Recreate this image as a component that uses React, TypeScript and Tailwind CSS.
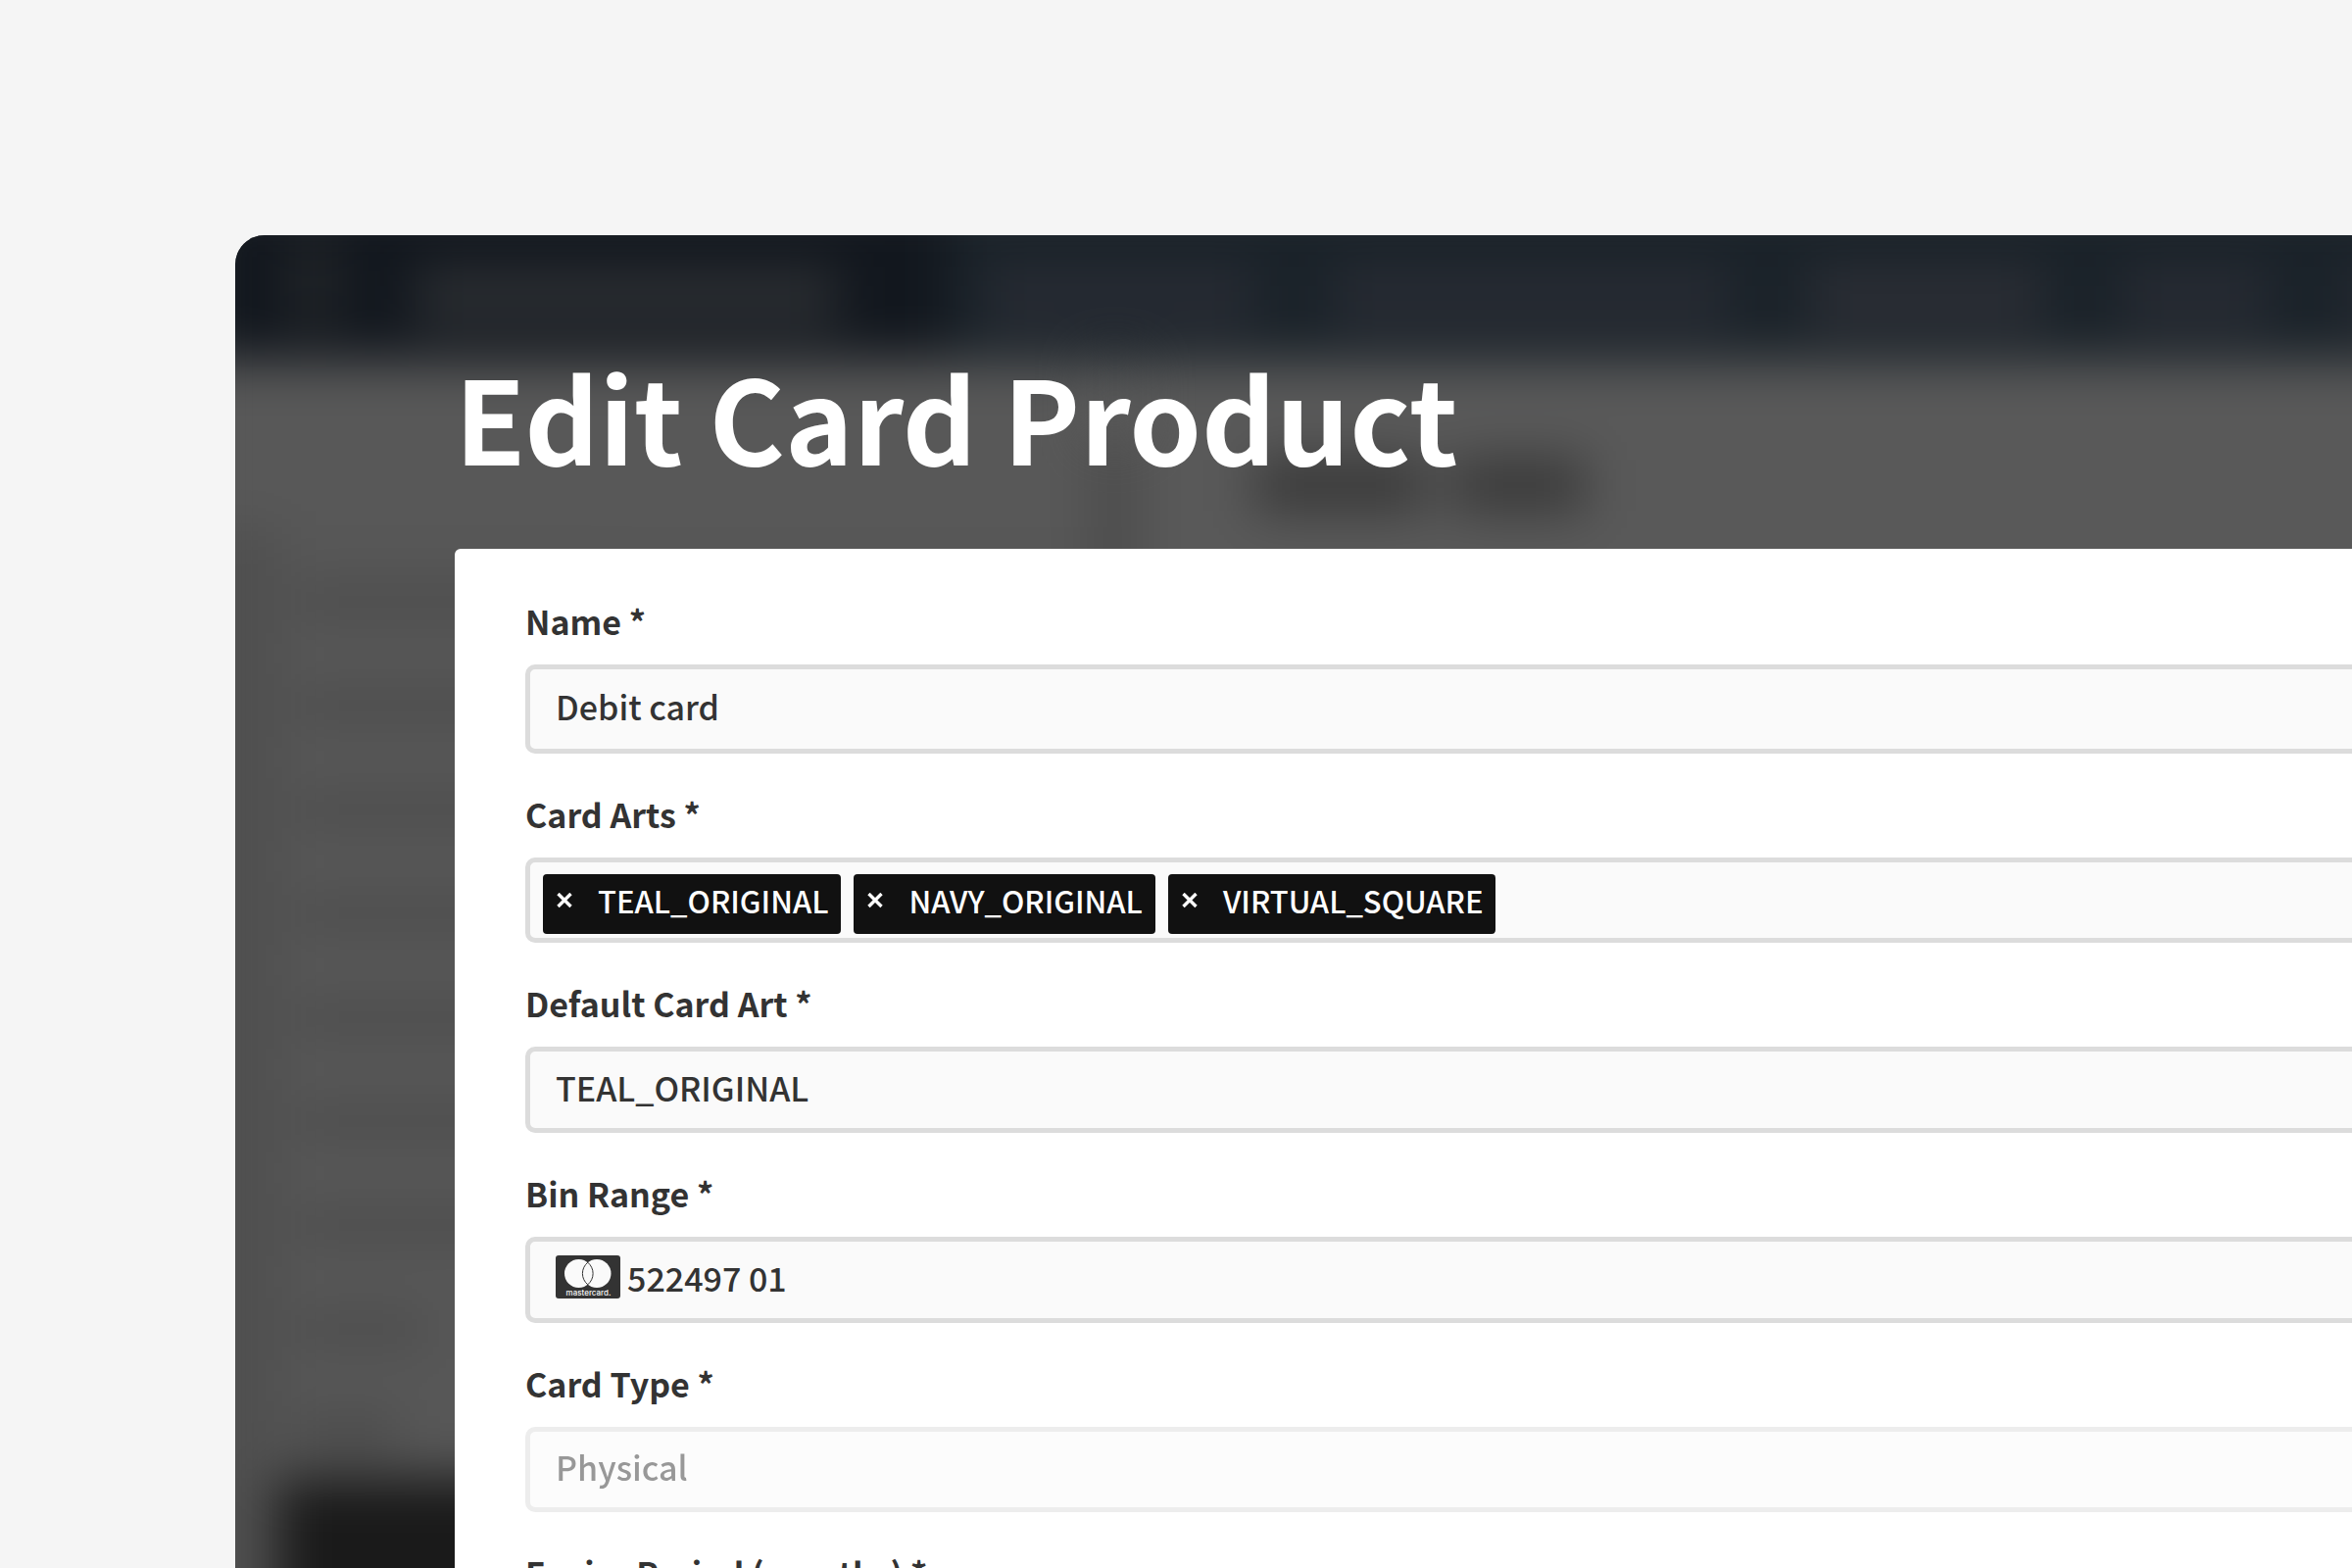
import { useState } from "react";
import type { ReactNode } from "react";

const CARD_ARTS = ["TEAL_ORIGINAL", "NAVY_ORIGINAL", "VIRTUAL_SQUARE"];

const CONTROL =
  "block w-full rounded-[10px] border-[5px] border-[#dcdcdc] bg-[#fafafa] px-[26px] pb-1.5 text-left font-medium text-[#333] outline-none focus:border-[#bbb]";

interface FieldProps {
  id: string;
  label: string;
  children: ReactNode;
}

function Field({ id, label, children }: FieldProps) {
  return (
    <div className="flex flex-col gap-5">
      <label id={`${id}-label`} htmlFor={id} className="self-start leading-[48px] font-bold">
        {label} *
      </label>
      {children}
    </div>
  );
}

function MastercardIcon() {
  return (
    <svg viewBox="0 0 66 44" className="h-11 w-[66px] shrink-0" aria-hidden="true">
      <rect width="66" height="44" rx="3" fill="#333" />
      <circle cx="23.5" cy="18.5" r="14.5" fill="#fafafa" />
      <circle cx="42" cy="18.5" r="14.5" fill="#fafafa" />
      <path
        d="M32.75 7.2a14.6 14.6 0 0 1 0 22.6a14.6 14.6 0 0 1 0-22.6z"
        fill="#fafafa"
        stroke="#333"
        strokeWidth="1"
      />
      <text x="33.5" y="40.5" textAnchor="middle" fontSize="8" fill="#fafafa" fontFamily="Inter, sans-serif">
        mastercard.
      </text>
    </svg>
  );
}

function CloseIcon() {
  return (
    <svg viewBox="0 0 16 16" className="h-4 w-4" aria-hidden="true">
      <path d="M1.5 1l13 13M14.5 1l-13 13" stroke="currentColor" strokeWidth="3.4" fill="none" />
    </svg>
  );
}

// Dimmed product page that sits behind the dialog
function Backdrop() {
  return (
    <div className="absolute inset-0 overflow-hidden bg-[#595959]" aria-hidden="true">
      <div className="-mx-10 -mt-10 blur-[26px]">
        <div className="flex h-[168px] items-end bg-[#1a2229]">
          <div className="flex h-[168px] w-[765px] items-end gap-20 bg-[#12171e] pb-8 pl-24">
            <div className="h-24 w-12 bg-[#222528]" />
            <div className="h-16 w-[430px] bg-[#2a2d31]" />
          </div>
          <div className="flex gap-20 pb-8 pl-10">
            <div className="h-16 w-[275px] bg-[#272b33]" />
            <div className="h-16 w-[405px] bg-[#272b33]" />
            <div className="h-16 w-60 bg-[#2b2e35]" />
            <div className="h-16 w-[150px] bg-[#272b33]" />
            <div className="h-16 w-40 bg-[#272b33]" />
          </div>
        </div>
        <div className="flex">
          <div className="flex h-[1300px] w-[914px] flex-col bg-[#585858]">
            <div className="h-[170px]" />
            <div className="flex flex-1 flex-col bg-[#4f4f4f] pl-[84px]">
              <div className="flex flex-col gap-[74px] bg-[#575757] pt-[60px] pb-[30px] pl-5">
                <div className="h-8 w-80 bg-[#4b4b4b]" />
                <div className="h-8 w-96 bg-[#4b4b4b]" />
                <div className="h-8 w-80 bg-[#4b4b4b]" />
                <div className="h-8 w-96 bg-[#4b4b4b]" />
                <div className="h-8 w-96 bg-[#4b4b4b]" />
                <div className="h-8 w-96 bg-[#4b4b4b]" />
                <div className="h-8 w-96 bg-[#4b4b4b]" />
                <div className="h-8 w-[130px] bg-[#4b4b4b]" />
                <div className="h-8 w-[100px] bg-[#484848]" />
              </div>
              <div className="flex-1 bg-[#1a1a1a]" />
            </div>
          </div>
          <div className="mt-20 w-12 bg-[#4c4c4c]" />
          <div className="flex flex-1 items-start gap-7 bg-[#595959] pt-[100px] pl-[118px]">
            <div className="h-[54px] w-[175px] bg-[#383838]" />
            <div className="h-[54px] w-[135px] bg-[#383838]" />
          </div>
        </div>
      </div>
    </div>
  );
}

export default function App() {
  const [name, setName] = useState("Debit card");
  const [arts, setArts] = useState(CARD_ARTS);
  const [defaultArt, setDefaultArt] = useState("TEAL_ORIGINAL");

  const removeArt = (art: string) => setArts(arts.filter((a) => a !== art));

  return (
    <div className="flex h-screen overflow-hidden bg-[#f5f5f5] pt-60 pl-60 font-['Noto_Sans_CJK_SC','Noto_Sans_CJK_JP',sans-serif] text-[34px] text-[#333]">
      <main className="relative -mr-40 flex-1 overflow-hidden rounded-tl-[30px]">
        <Backdrop />

        <div role="dialog" aria-labelledby="dialog-title" className="relative flex flex-col pt-[100px] pl-56">
          <h1 id="dialog-title" className="h-[220px] text-[118px] leading-[168px] font-bold text-white">
            Edit Card Product
          </h1>

          <form className="flex flex-col gap-[38px] rounded-md bg-white px-[72px] pt-[50px] pb-20">
            <Field id="name" label="Name">
              <input
                id="name"
                type="text"
                value={name}
                onChange={(e) => setName(e.target.value)}
                className={`${CONTROL} h-[91px]`}
              />
            </Field>

            <Field id="card-arts" label="Card Arts">
              <div className="flex h-[87px] items-start gap-[13px] rounded-[10px] border-[5px] border-[#dcdcdc] bg-[#fafafa] pt-3 pl-[13px]">
                {arts.map((art) => (
                  <span
                    key={art}
                    className="flex h-[61px] items-start rounded bg-[#111] pr-[13px] pl-[14px] text-[31px] leading-[54px] font-medium text-white"
                  >
                    <button
                      type="button"
                      aria-label={`Remove ${art}`}
                      onClick={() => removeArt(art)}
                      className="mr-[26px] flex h-[54px] items-center"
                    >
                      <CloseIcon />
                    </button>
                    {art}
                  </span>
                ))}
                <input id="card-arts" type="text" className="min-w-0 flex-1 bg-transparent outline-none" />
              </div>
            </Field>

            <Field id="default-art" label="Default Card Art">
              <select
                id="default-art"
                value={defaultArt}
                onChange={(e) => setDefaultArt(e.target.value)}
                className={`${CONTROL} h-[88px] appearance-none`}
              >
                {CARD_ARTS.map((art) => (
                  <option key={art}>{art}</option>
                ))}
              </select>
            </Field>

            <Field id="bin-range" label="Bin Range">
              <button
                id="bin-range"
                type="button"
                aria-haspopup="listbox"
                aria-labelledby="bin-range-label bin-range"
                className={`${CONTROL} h-[88px]`}
              >
                <span className="flex items-center gap-[7px]">
                  <MastercardIcon />
                  522497 01
                </span>
              </button>
            </Field>

            <Field id="card-type" label="Card Type">
              <select id="card-type" disabled className={`${CONTROL} h-[87px] appearance-none opacity-50`}>
                <option>Physical</option>
              </select>
            </Field>

            <Field id="expiry" label="Expiry Period (months)">
              <input id="expiry" type="number" className={`${CONTROL} h-[91px]`} />
            </Field>
          </form>
        </div>
      </main>
    </div>
  );
}
